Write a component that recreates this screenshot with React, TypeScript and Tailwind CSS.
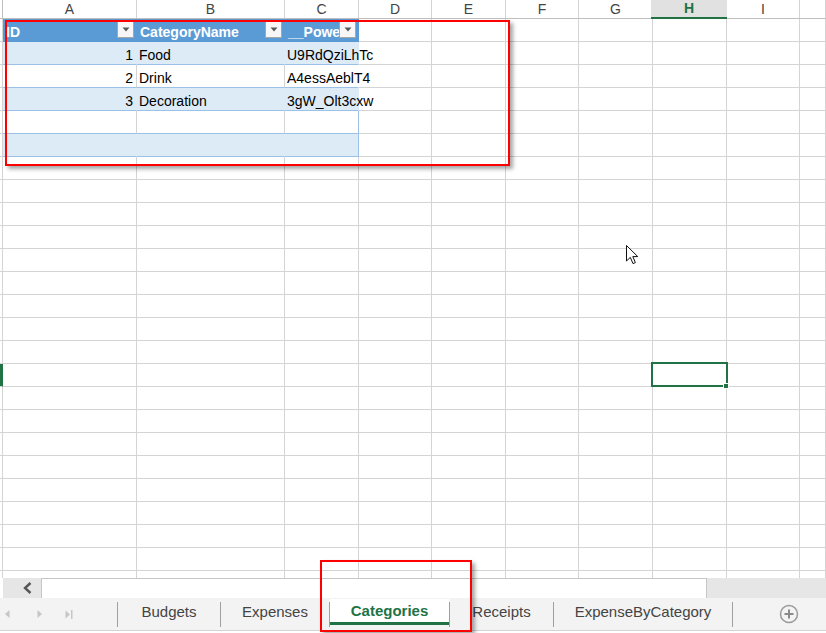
import React from "react";

const COLS = [
  { name: "A", w: "w-[134px] shrink-0" },
  { name: "B", w: "w-[148px] shrink-0" },
  { name: "C", w: "w-[74px] shrink-0" },
  { name: "D", w: "w-[73px] shrink-0" },
  { name: "E", w: "w-[74px] shrink-0" },
  { name: "F", w: "w-[73px] shrink-0" },
  { name: "G", w: "w-[74px] shrink-0" },
  { name: "H", w: "w-[74px] shrink-0" },
  { name: "I", w: "w-[73px] shrink-0" },
  { name: "J", w: "flex-1" },
];

const DATA: [string, string, string][] = [
  ["1", "Food", "U9RdQziLhTc"],
  ["2", "Drink", "A4essAeblT4"],
  ["3", "Decoration", "3gW_Olt3cxw"],
  ["", "", ""],
  ["", "", ""],
];

function FilterButton() {
  return (
    <div className="w-[17px] h-[17px] shrink-0 mr-[2px] self-center border border-[#a6a6a6] bg-[#f7f7f7] flex items-center justify-center">
      <svg width="8" height="5" viewBox="0 0 8 5">
        <path d="M0.5 0.5 L7.5 0.5 L4 4.5 Z" fill="#595959" />
      </svg>
    </div>
  );
}

function ColumnHeader() {
  return (
    <div className="flex h-[19px] shrink-0 border-b border-[#bfbfbf]">
      <div className="w-[3px] shrink-0 border-r border-[#bfbfbf]" />
      {COLS.map((c) =>
        c.name === "H" ? (
          <div
            key={c.name}
            className="-ml-[2px] w-[76px] shrink-0 -mb-px h-[19px] bg-[#e1e1e1] border-b-2 border-[#217346] flex items-center justify-center text-[14px] font-bold text-[#217346]"
          >
            H
          </div>
        ) : (
          <div
            key={c.name}
            className={`${c.w} border-r border-[#d4d4d4] flex items-center justify-center text-[14px] text-[#444]`}
          >
            {c.name === "J" ? "" : c.name}
          </div>
        )
      )}
    </div>
  );
}

function TableCell({ r, c, children }: { r: number; c: number; children?: React.ReactNode }) {
  const w = COLS[c].w;
  if (r === 0) {
    return (
      <div className={`${w} h-[23px] bg-[#5b9bd5] border-r border-b border-[#5b9bd5] flex items-end pb-[1px] text-[14px] font-bold text-white`}>
        <div className="flex-1 min-w-0 overflow-hidden whitespace-nowrap pl-[3px] leading-4">{children}</div>
        <FilterButton />
      </div>
    );
  }
  const banded = r % 2 === 1;
  const bg = banded ? "bg-[#ddebf7]" : "bg-white";
  let right = banded ? "border-r-[#ddebf7]" : "border-r-[#d4d4d4]";
  if (c === 2) right = r <= 3 ? "border-r-transparent" : "border-r-[#9bc2e6]";
  const align = c === 0 ? "justify-end pr-[3px]" : "justify-start pl-[2px]";
  return (
    <div className={`${w} ${bg} ${right} ${align} relative h-[23px] border-r border-b border-b-[#9bc2e6] flex items-end pb-[1px] text-[14px] leading-4 text-black whitespace-nowrap`}>
      {children}
    </div>
  );
}

function GridRow({ index }: { index: number }) {
  const selectedRow = index === 15;
  return (
    <div className="flex h-[23px] shrink-0">
      <div className={`w-[3px] shrink-0 border-r border-b border-[#d4d4d4] ${selectedRow ? "bg-[#217346] border-r-[#217346]" : ""}`} />
      {COLS.map((c, ci) => {
        if (index < 6 && ci < 3) {
          const text = index === 0 ? ["ID", "CategoryName", "__PowerAppsId__"][ci] : DATA[index - 1][ci];
          return (
            <TableCell key={c.name} r={index} c={ci}>
              {text}
            </TableCell>
          );
        }
        const isSel = selectedRow && c.name === "H";
        return (
          <div key={c.name} className={`${c.w} relative h-[23px] border-r border-b border-[#d4d4d4]`}>
            {isSel && (
              <>
                <div className="absolute z-10 -left-[2px] -top-[2px] w-[77px] h-[25px] border-2 border-[#217346]" />
                <div className="absolute z-20 left-[70px] top-[19px] w-[6px] h-[6px] bg-[#217346] border border-white" />
              </>
            )}
          </div>
        );
      })}
    </div>
  );
}

function ScrollBar() {
  return (
    <div className="flex h-[20px] shrink-0">
      <div className="w-[3px] bg-white" />
      <div className="w-[38px] bg-[#e6e6e6] flex items-center justify-end pr-[9px]">
        <svg width="9" height="12" viewBox="0 0 9 12">
          <path d="M7.5 1 L2 6 L7.5 11" fill="none" stroke="#555" strokeWidth="2.4" />
        </svg>
      </div>
      <div className="w-[666px] bg-white border border-[#c6c6c6] border-b-0" />
      <div className="flex-1 bg-[#e6e6e6]" />
    </div>
  );
}

function Sep() {
  return <div className="w-px h-[25px] bg-[#a0a0a0] shrink-0" />;
}

function SheetTabs() {
  return (
    <div className="flex items-center h-[33px] shrink-0 bg-[#f3f3f3] border-b border-[#d4d4d4] text-[15px] text-[#444]">
      <div className="w-[117px] flex items-center shrink-0 h-full">
        <svg className="ml-[5px]" width="5" height="8" viewBox="0 0 5 8">
          <path d="M4.5 0 L0 4 L4.5 8 Z" fill="#c6c6c6" />
        </svg>
        <svg className="ml-[27px]" width="5" height="8" viewBox="0 0 5 8">
          <path d="M0.5 0 L5 4 L0.5 8 Z" fill="#c6c6c6" />
        </svg>
        <svg className="ml-[23px]" width="8" height="9" viewBox="0 0 8 9">
          <path d="M0.5 0.5 L5 4.5 L0.5 8.5 Z" fill="#c6c6c6" />
          <rect x="6" y="0" width="1.5" height="9" fill="#c6c6c6" />
        </svg>
      </div>
      <Sep />
      <div className="w-[102px] shrink-0 text-center -mt-[4px]">Budgets</div>
      <Sep />
      <div className="w-[108px] shrink-0 text-center -mt-[4px]">Expenses</div>
      <Sep />
      <div className="w-[119px] shrink-0 h-[26px] self-start mt-[1px] bg-white border-b-[3px] border-[#217346] flex items-center justify-center pt-[2px] font-bold text-[#217346]">
        Categories
      </div>
      <Sep />
      <div className="w-[103px] shrink-0 text-center -mt-[4px]">Receipts</div>
      <Sep />
      <div className="w-[178px] shrink-0 text-center -mt-[4px]">ExpenseByCategory</div>
      <Sep />
      <div className="flex-1 flex justify-center pl-[18px]">
        <svg width="20" height="20" viewBox="0 0 20 20">
          <circle cx="10" cy="10" r="8.5" fill="none" stroke="#9a9a9a" strokeWidth="1.5" />
          <path d="M10 5.5 V14.5 M5.5 10 H14.5" stroke="#8a8a8a" strokeWidth="2" />
        </svg>
      </div>
    </div>
  );
}

export default function App() {
  return (
    <div className="relative w-[826px] h-[633px] overflow-hidden bg-white font-['Liberation_Sans',Arial,sans-serif] flex flex-col">
      <ColumnHeader />
      <div className="h-[559px] shrink-0 overflow-hidden flex flex-col">
        {Array.from({ length: 25 }).map((_, i) => (
          <GridRow key={i} index={i} />
        ))}
      </div>
      <ScrollBar />
      <SheetTabs />
      <div className="flex-1 bg-white" />

      {/* mouse pointer */}
      <svg className="absolute left-[626px] top-[245px]" width="13" height="20" viewBox="0 0 13 20">
        <path d="M0.5 0.5 L0.5 16 L4.3 12.4 L7 18.6 L9.4 17.6 L6.8 11.6 L11.8 11.6 Z" fill="white" stroke="#111" strokeWidth="1" strokeLinejoin="round" />
      </svg>

      {/* annotation boxes */}
      <div className="absolute left-[5px] top-[20px] w-[505px] h-[146px] border-2 border-[#ff0000] shadow-[3px_3px_4px_rgba(0,0,0,0.35)] pointer-events-none" />
      <div className="absolute left-[320px] top-[560px] w-[152px] h-[72px] border-2 border-[#ff0000] shadow-[3px_3px_4px_rgba(0,0,0,0.35)] pointer-events-none" />
    </div>
  );
}
